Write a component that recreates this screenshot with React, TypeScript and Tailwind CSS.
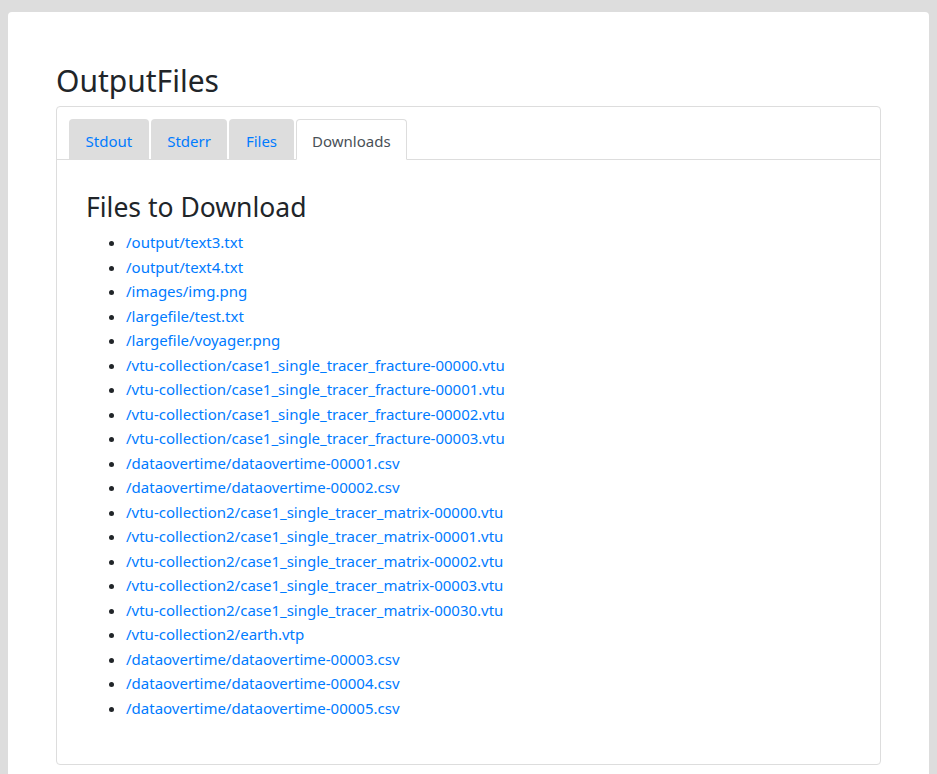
const TABS = ["Stdout", "Stderr", "Files", "Downloads"];

const FILES = [
  "/output/text3.txt",
  "/output/text4.txt",
  "/images/img.png",
  "/largefile/test.txt",
  "/largefile/voyager.png",
  "/vtu-collection/case1_single_tracer_fracture-00000.vtu",
  "/vtu-collection/case1_single_tracer_fracture-00001.vtu",
  "/vtu-collection/case1_single_tracer_fracture-00002.vtu",
  "/vtu-collection/case1_single_tracer_fracture-00003.vtu",
  "/dataovertime/dataovertime-00001.csv",
  "/dataovertime/dataovertime-00002.csv",
  "/vtu-collection2/case1_single_tracer_matrix-00000.vtu",
  "/vtu-collection2/case1_single_tracer_matrix-00001.vtu",
  "/vtu-collection2/case1_single_tracer_matrix-00002.vtu",
  "/vtu-collection2/case1_single_tracer_matrix-00003.vtu",
  "/vtu-collection2/case1_single_tracer_matrix-00030.vtu",
  "/vtu-collection2/earth.vtp",
  "/dataovertime/dataovertime-00003.csv",
  "/dataovertime/dataovertime-00004.csv",
  "/dataovertime/dataovertime-00005.csv",
];

export default function App() {
  const active = "Downloads";
  return (
    <div className="min-h-[774px] bg-[#dddddd] px-2 pt-3 font-['Noto_Sans',sans-serif] text-[#212529]">
      <div className="rounded bg-white px-12 pb-10 pt-[50px]">
        <h2 className="mb-[6px] text-[30px] leading-[38px]">OutputFiles</h2>
        <div className="rounded border border-[#dddddd]">
          <div className="flex gap-[2px] border-b border-[#dddddd] px-3 pt-3">
            {TABS.map((t) => (
              <a
                key={t}
                href="#"
                className={`-mb-px rounded-t px-[15.5px] pb-[5px] pt-[9px] text-[15px] leading-[25px] ${
                  t === active
                    ? "border border-[#dddddd] border-b-white bg-white text-[#495057]"
                    : "border border-transparent bg-[#dddddd] text-[#007bff]"
                }`}
              >
                {t}
              </a>
            ))}
          </div>
          <div className="px-[29px] pb-7 pt-[31px]">
            <h3 className="mb-[6px] text-[26.5px] leading-[33px]">Files to Download</h3>
            <ul className="mb-4 list-disc pl-10">
              {FILES.map((f) => (
                <li key={f} className="text-[15px] leading-[24.5px]">
                  <a href="#" className="text-[#007bff]">{f}</a>
                </li>
              ))}
            </ul>
          </div>
        </div>
      </div>
    </div>
  );
}
